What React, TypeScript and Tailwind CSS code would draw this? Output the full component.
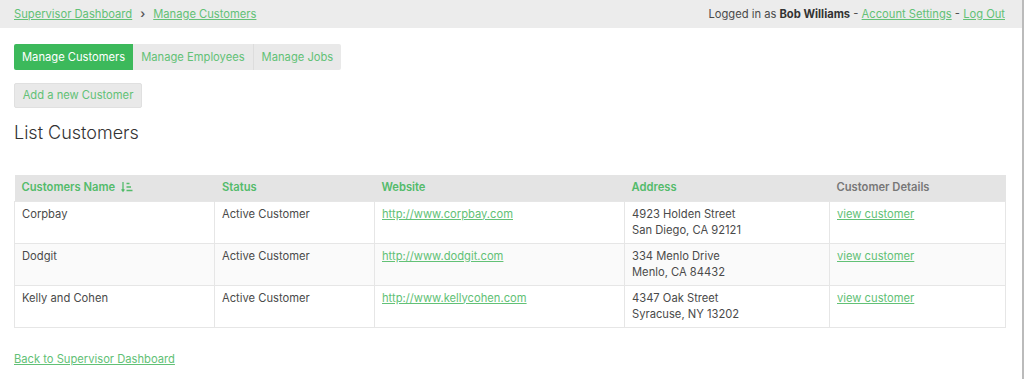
const rows = [
  {
    name: "Corpbay",
    status: "Active Customer",
    site: "http://www.corpbay.com",
    street: "4923 Holden Street",
    city: "San Diego, CA 92121",
  },
  {
    name: "Dodgit",
    status: "Active Customer",
    site: "http://www.dodgit.com",
    street: "334 Menlo Drive",
    city: "Menlo, CA 84432",
  },
  {
    name: "Kelly and Cohen",
    status: "Active Customer",
    site: "http://www.kellycohen.com",
    street: "4347 Oak Street",
    city: "Syracuse, NY 13202",
  },
]

function SortIcon() {
  return (
    <svg width="12" height="12" viewBox="0 0 12 12" className="inline-block ml-[3px] -mt-[2px]" fill="none" stroke="currentColor" strokeWidth="1.3">
      <path d="M2 1v9M0.6 8.3L2 10.2 3.4 8.3" />
      <path d="M5.5 2.5h3M5.5 6h4.5M5.5 9.5h6" />
    </svg>
  )
}

export default function App() {
  return (
    <div className="w-[1024px] h-[379px] bg-white text-[11.2px] text-[#4a4a4a] border-r-2 border-[#bbb]" style={{ fontFamily: "Inter, 'Liberation Sans', sans-serif" }}>
      <div className="h-[28px] bg-[#ececec] flex items-center justify-between px-[14px]">
        <div className="flex items-center">
          <a className="text-[#62c176] underline">Supervisor Dashboard</a>
          <span className="mx-[8px] text-[#555] text-[12px] font-semibold">›</span>
          <a className="text-[#62c176] underline">Manage Customers</a>
        </div>
        <div className="pr-[3px]">
          Logged in as <b className="text-[#333]">Bob Williams</b> -{" "}
          <a className="text-[#62c176] underline">Account Settings</a> -{" "}
          <a className="text-[#62c176] underline">Log Out</a>
        </div>
      </div>

      <div className="px-[14px]">
        <div className="flex mt-[16px] h-[26px]">
          <div className="bg-[#3cb95b] text-white px-[8px] flex items-center rounded-l-[2px]">Manage Customers</div>
          <div className="bg-[#e9e9e9] text-[#62c176] px-[8px] flex items-center border-r border-[#ddd]">Manage Employees</div>
          <div className="bg-[#e9e9e9] text-[#62c176] px-[8px] flex items-center rounded-r-[2px]">Manage Jobs</div>
        </div>

        <div className="mt-[13px] h-[25px] w-[128px] bg-[#e9e9e9] text-[#62c176] flex items-center justify-center rounded-[2px] border border-[#e0e0e0]">
          Add a new Customer
        </div>

        <h1 className="mt-[13px] text-[18px] font-light text-[#333] leading-[24px]">List Customers</h1>

        <table className="mt-[30px] w-[992px] border-collapse table-fixed">
          <colgroup>
            <col className="w-[200px]" />
            <col className="w-[160px]" />
            <col className="w-[250px]" />
            <col className="w-[205px]" />
            <col />
          </colgroup>
          <thead>
            <tr className="bg-[#e4e4e4] h-[26px] text-left">
              <th className="px-[7px] font-semibold text-[#52bb6a]">
                Customers Name <SortIcon />
              </th>
              <th className="px-[7px] font-semibold text-[#52bb6a] border-l border-[#e4e4e4]">Status</th>
              <th className="px-[7px] font-semibold text-[#52bb6a]">Website</th>
              <th className="px-[7px] font-semibold text-[#52bb6a]">Address</th>
              <th className="px-[7px] font-semibold text-[#777]">Customer Details</th>
            </tr>
          </thead>
          <tbody>
            {rows.map((r, i) => (
              <tr key={r.name} className={`h-[42px] align-top ${i === 1 ? "bg-[#fafafa]" : "bg-white"}`}>
                <td className="px-[7px] pt-[4px] border border-[#e6e6e6] leading-[16px]">{r.name}</td>
                <td className="px-[7px] pt-[4px] border border-[#e6e6e6] leading-[16px]">{r.status}</td>
                <td className="px-[7px] pt-[4px] border border-[#e6e6e6] leading-[16px]">
                  <a className="text-[#62c176] underline">{r.site}</a>
                </td>
                <td className="px-[7px] pt-[4px] pb-[5px] border border-[#e6e6e6] leading-[16px]">
                  {r.street}
                  <br />
                  {r.city}
                </td>
                <td className="px-[7px] pt-[4px] border border-[#e6e6e6] leading-[16px]">
                  <a className="text-[#62c176] underline">view customer</a>
                </td>
              </tr>
            ))}
          </tbody>
        </table>

        <a className="block mt-[23px] text-[#62c176] underline">Back to Supervisor Dashboard</a>
      </div>
    </div>
  )
}
